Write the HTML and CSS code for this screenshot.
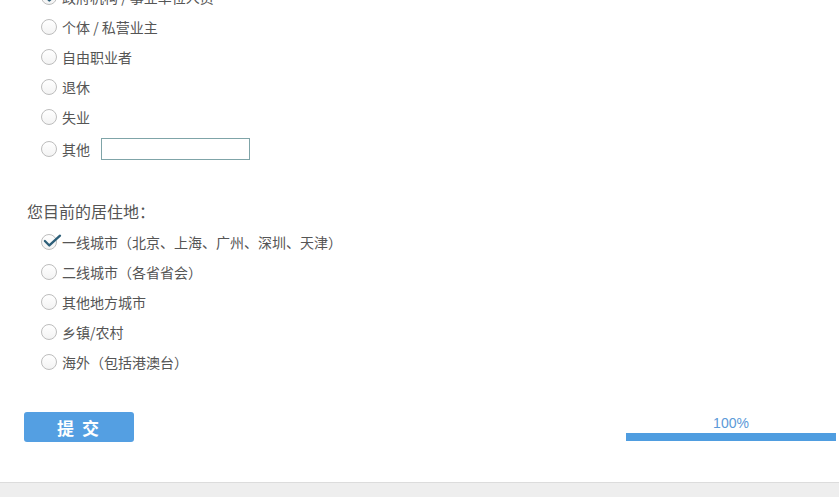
FILE: index.html
```html
<!DOCTYPE html>
<html lang="zh-CN">
<head>
  <meta charset="UTF-8" />
  <title>问卷调查</title>
  <link rel="stylesheet" href="styles.css">
</head>
<body>
  <div class="survey">
    <div class="question first">
      <ul class="options">
        <li class="option checked">
          <span class="radio">
            <svg class="tick" viewBox="0 0 22 18" width="20" height="16"><path d="M3 9 L8 14 L20 3" fill="none" stroke="#2c5e78" stroke-width="2.6" stroke-linecap="round" stroke-linejoin="round"/></svg>
          </span>
          <span class="label">政府机构 / 事业单位人员</span>
        </li>
        <li class="option"><span class="radio"></span><span class="label">个体 / 私营业主</span></li>
        <li class="option"><span class="radio"></span><span class="label">自由职业者</span></li>
        <li class="option"><span class="radio"></span><span class="label">退休</span></li>
        <li class="option"><span class="radio"></span><span class="label">失业</span></li>
        <li class="option other">
          <span class="radio"></span><span class="label">其他</span>
          <input type="text" class="other-input" />
        </li>
      </ul>
    </div>

    <div class="question">
      <div class="question-title">您目前的居住地：</div>
      <ul class="options">
        <li class="option checked">
          <span class="radio">
            <svg class="tick" viewBox="0 0 22 18" width="20" height="16"><path d="M3 9 L8 14 L20 3" fill="none" stroke="#2c5e78" stroke-width="2.6" stroke-linecap="round" stroke-linejoin="round"/></svg>
          </span>
          <span class="label">一线城市（北京、上海、广州、深圳、天津）</span>
        </li>
        <li class="option"><span class="radio"></span><span class="label">二线城市（各省省会）</span></li>
        <li class="option"><span class="radio"></span><span class="label">其他地方城市</span></li>
        <li class="option"><span class="radio"></span><span class="label">乡镇/农村</span></li>
        <li class="option"><span class="radio"></span><span class="label">海外（包括港澳台）</span></li>
      </ul>
    </div>

    <div class="submit-row">
      <button class="submit-btn">提 交</button>
      <div class="progress">
        <div class="progress-text">100%</div>
        <div class="progress-bar"><div class="progress-fill" style="width: 100%"></div></div>
      </div>
    </div>
  </div>

  <div class="page-footer"></div>
</body>
</html>
```

FILE: styles.css
```css
* {
  margin: 0;
  padding: 0;
  box-sizing: border-box;
}

body {
  font-family: "Noto Sans CJK SC", "Liberation Sans", sans-serif;
  color: #555;
  background: #fff;
  height: 497px;
  overflow: hidden;
}

.survey {
  display: flow-root;
  padding: 0 3px 0 24px;
  height: 482px;
}

.question.first {
  margin-top: -18px;
}

.question-title {
  font-size: 16px;
  line-height: 24px;
  margin: 33px 0 4px 3px;
  color: #555;
}

.options {
  list-style: none;
  padding-left: 17px;
}

.option {
  display: flex;
  align-items: center;
  height: 30px;
  font-size: 14px;
}

.option.other {
  height: 34px;
}

.radio {
  position: relative;
  width: 16px;
  height: 16px;
  border: 1px solid #bdbdbd;
  border-radius: 50%;
  background: linear-gradient(#fff, #f3f3f3);
  margin-right: 5px;
  flex-shrink: 0;
}

.tick {
  position: absolute;
  left: 0;
  top: -2px;
}

.label {
  line-height: 20px;
  color: #555;
}

.other-input {
  margin-left: 11px;
  width: 149px;
  height: 22px;
  border: 1px solid #7fa4a8;
  outline: none;
  background: #fff;
}

.submit-row {
  display: flex;
  justify-content: space-between;
  align-items: center;
  margin-top: 35px;
}

.submit-btn {
  width: 110px;
  height: 30px;
  border: none;
  border-radius: 3px;
  background: #549fe2;
  color: #fff;
  font-family: "Noto Sans CJK SC", sans-serif;
  font-size: 17px;
  font-weight: bold;
  letter-spacing: 2px;
}

.progress {
  width: 210px;
  display: flex;
  flex-direction: column;
  gap: 1px;
  margin-top: 2px;
}

.progress-text {
  text-align: center;
  font-size: 14px;
  line-height: 17px;
  color: #5b9ad8;
  font-family: "Liberation Sans", sans-serif;
}

.progress-bar {
  height: 8px;
  background: #e6e6e6;
}

.progress-fill {
  height: 100%;
  background: #4f9de0;
}

.page-footer {
  height: 15px;
  background: #eeeeee;
  border-top: 1px solid #dcdcdc;
}
```
